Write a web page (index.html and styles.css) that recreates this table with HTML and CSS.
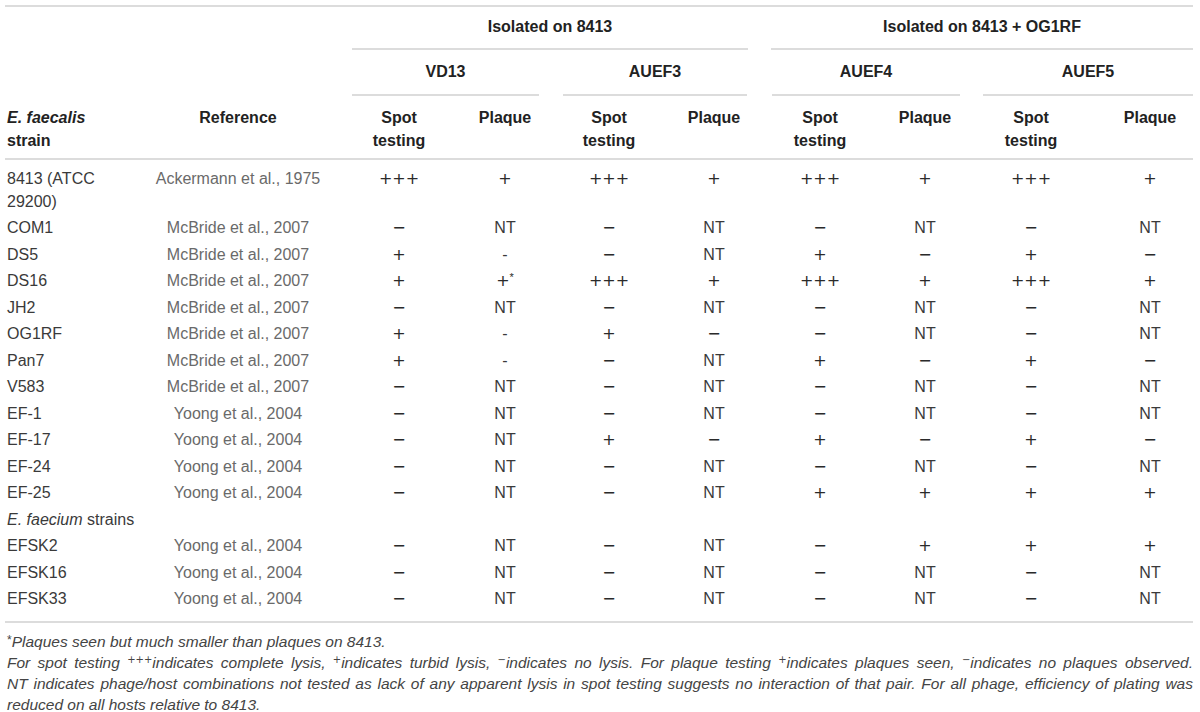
FILE: index.html
```html
<!DOCTYPE html>
<html>
<head>
<meta charset="utf-8">
<link rel="stylesheet" href="styles.css">
</head>
<body>
<div class="page">
<table class="data">
<colgroup>
<col class="c-strain"><col class="c-ref">
<col class="c3"><col class="c4"><col class="c5"><col class="c6">
<col class="c7"><col class="c8"><col class="c9"><col class="c10">
</colgroup>
<thead>
<tr class="h1">
<td colspan="2"></td>
<th colspan="4"><div class="rule g1">Isolated on 8413</div></th>
<th colspan="4"><div class="rule g2">Isolated on 8413 + OG1RF</div></th>
</tr>
<tr class="h2">
<td colspan="2"></td>
<th colspan="2"><div class="rule s-vd13">VD13</div></th>
<th colspan="2"><div class="rule s-auef3">AUEF3</div></th>
<th colspan="2"><div class="rule s-auef4">AUEF4</div></th>
<th colspan="2"><div class="rule s-auef5">AUEF5</div></th>
</tr>
<tr class="h3">
<th class="strain"><i>E. faecalis</i> strain</th>
<th class="ref">Reference</th>
<th>Spot<br>testing</th><th>Plaque</th>
<th>Spot<br>testing</th><th>Plaque</th>
<th>Spot<br>testing</th><th>Plaque</th>
<th>Spot<br>testing</th><th class="last">Plaque</th>
</tr>
</thead>
<tbody>
<tr class="first"><td class="strain">8413 (ATCC 29200)</td><td class="ref">Ackermann et al., 1975</td><td class="sym">+++</td><td class="sym">+</td><td class="sym">+++</td><td class="sym">+</td><td class="sym">+++</td><td class="sym">+</td><td class="sym">+++</td><td class="sym last">+</td></tr>
<tr><td class="strain">COM1</td><td class="ref">McBride et al., 2007</td><td class="sym">−</td><td>NT</td><td class="sym">−</td><td>NT</td><td class="sym">−</td><td>NT</td><td class="sym">−</td><td class="last">NT</td></tr>
<tr><td class="strain">DS5</td><td class="ref">McBride et al., 2007</td><td class="sym">+</td><td>-</td><td class="sym">−</td><td>NT</td><td class="sym">+</td><td class="sym">−</td><td class="sym">+</td><td class="sym last">−</td></tr>
<tr><td class="strain">DS16</td><td class="ref">McBride et al., 2007</td><td class="sym">+</td><td class="sym">+<sup class="ast">*</sup></td><td class="sym">+++</td><td class="sym">+</td><td class="sym">+++</td><td class="sym">+</td><td class="sym">+++</td><td class="sym last">+</td></tr>
<tr><td class="strain">JH2</td><td class="ref">McBride et al., 2007</td><td class="sym">−</td><td>NT</td><td class="sym">−</td><td>NT</td><td class="sym">−</td><td>NT</td><td class="sym">−</td><td class="last">NT</td></tr>
<tr><td class="strain">OG1RF</td><td class="ref">McBride et al., 2007</td><td class="sym">+</td><td>-</td><td class="sym">+</td><td class="sym">−</td><td class="sym">−</td><td>NT</td><td class="sym">−</td><td class="last">NT</td></tr>
<tr><td class="strain">Pan7</td><td class="ref">McBride et al., 2007</td><td class="sym">+</td><td>-</td><td class="sym">−</td><td>NT</td><td class="sym">+</td><td class="sym">−</td><td class="sym">+</td><td class="sym last">−</td></tr>
<tr><td class="strain">V583</td><td class="ref">McBride et al., 2007</td><td class="sym">−</td><td>NT</td><td class="sym">−</td><td>NT</td><td class="sym">−</td><td>NT</td><td class="sym">−</td><td class="last">NT</td></tr>
<tr><td class="strain">EF-1</td><td class="ref">Yoong et al., 2004</td><td class="sym">−</td><td>NT</td><td class="sym">−</td><td>NT</td><td class="sym">−</td><td>NT</td><td class="sym">−</td><td class="last">NT</td></tr>
<tr><td class="strain">EF-17</td><td class="ref">Yoong et al., 2004</td><td class="sym">−</td><td>NT</td><td class="sym">+</td><td class="sym">−</td><td class="sym">+</td><td class="sym">−</td><td class="sym">+</td><td class="sym last">−</td></tr>
<tr><td class="strain">EF-24</td><td class="ref">Yoong et al., 2004</td><td class="sym">−</td><td>NT</td><td class="sym">−</td><td>NT</td><td class="sym">−</td><td>NT</td><td class="sym">−</td><td class="last">NT</td></tr>
<tr><td class="strain">EF-25</td><td class="ref">Yoong et al., 2004</td><td class="sym">−</td><td>NT</td><td class="sym">−</td><td>NT</td><td class="sym">+</td><td class="sym">+</td><td class="sym">+</td><td class="sym last">+</td></tr>
<tr><td class="strain group" colspan="10"><i>E. faecium</i> strains</td></tr>
<tr><td class="strain">EFSK2</td><td class="ref">Yoong et al., 2004</td><td class="sym">−</td><td>NT</td><td class="sym">−</td><td>NT</td><td class="sym">−</td><td class="sym">+</td><td class="sym">+</td><td class="sym last">+</td></tr>
<tr><td class="strain">EFSK16</td><td class="ref">Yoong et al., 2004</td><td class="sym">−</td><td>NT</td><td class="sym">−</td><td>NT</td><td class="sym">−</td><td>NT</td><td class="sym">−</td><td class="last">NT</td></tr>
<tr class="lastrow"><td class="strain">EFSK33</td><td class="ref">Yoong et al., 2004</td><td class="sym">−</td><td>NT</td><td class="sym">−</td><td>NT</td><td class="sym">−</td><td>NT</td><td class="sym">−</td><td class="last">NT</td></tr>
</tbody>
</table>
<div class="notes">
<p class="line"><span class="star">*</span>Plaques seen but much smaller than plaques on 8413.</p>
<p class="line full">For spot testing <sup>+++</sup>indicates complete lysis, <sup>+</sup>indicates turbid lysis, <sup>−</sup>indicates no lysis. For plaque testing <sup>+</sup>indicates plaques seen, <sup>−</sup>indicates no plaques observed.</p>
<p class="line full">NT indicates phage/host combinations not tested as lack of any apparent lysis in spot testing suggests no interaction of that pair. For all phage, efficiency of plating was</p>
<p class="line">reduced on all hosts relative to 8413.</p>
</div>
</div>
</body>
</html>
```

FILE: styles.css
```css
html, body {
  margin: 0;
  padding: 0;
  background: #ffffff;
}

body {
  font-family: "Liberation Sans", Arial, sans-serif;
  color: #333333;
  font-size: 16px;
}

.page {
  padding: 5px 7px 0 5px;
}

table.data {
  width: 1188px;
  border-collapse: separate;
  border-spacing: 0;
  table-layout: fixed;
  border-top: 2px solid #dcdcdc;
}

.c-strain { width: 145px; }
.c-ref { width: 198px; }
.c3 { width: 102px; }
.c4 { width: 110px; }
.c5 { width: 98px; }
.c6 { width: 112px; }
.c7 { width: 100px; }
.c8 { width: 110px; }
.c9 { width: 102px; }
.c10 { width: 111px; }

th, td {
  padding: 0;
  text-align: center;
}

th {
  font-weight: bold;
  color: #222222;
}

.rule {
  border-bottom: 2px solid #dcdcdc;
  line-height: 22px;
  text-align: center;
}

.h1 .rule {
  padding: 9px 0 10px;
}

.h2 .rule {
  padding: 11px 0 11px;
}

.g1 { margin: 0 22px 0 4px; }
.g2 { margin: 0 0 0 1px; }
.s-vd13 { margin: 0 21px 0 4px; }
.s-auef3 { margin: 0 23px 0 3px; }
.s-auef4 { margin: 0 20px 0 2px; }
.s-auef5 { margin: 0 0 0 3px; }

.h3 th {
  vertical-align: top;
  line-height: 23px;
  padding: 10px 0 6px;
  border-bottom: 2px solid #dcdcdc;
}

.h3 th.strain {
  text-align: left;
  padding-left: 2px;
  padding-right: 25px;
}

.h3 th.ref {
  padding-right: 22px;
}

.h3 th.last,
tbody td.last {
  padding-left: 25px;
}

tbody td {
  vertical-align: top;
  line-height: 22.5px;
  padding-top: 2px;
  padding-bottom: 2px;
  color: #3a3a3a;
}

tbody tr.first td {
  padding-top: 8px;
}

tbody tr.lastrow td {
  padding-bottom: 10px;
  border-bottom: 2px solid #dcdcdc;
}

tbody td.strain {
  text-align: left;
  padding-left: 2px;
  padding-right: 25px;
}

tbody td.group {
  padding-right: 0;
}

tbody td.ref {
  color: #6a6a6a;
  padding-right: 22px;
}

tbody td.sym {
  font-family: "DejaVu Sans", sans-serif;
  font-size: 16px;
  color: #2a2a2a;
}

sup.ast {
  font-family: "Liberation Sans", Arial, sans-serif;
  font-size: 11px;
  vertical-align: 5px;
  line-height: 0;
}

.notes {
  margin-top: 8px;
  padding-left: 2px;
  width: 1186px;
  font-style: italic;
  font-size: 15.5px;
  line-height: 21px;
  color: #444444;
}

.notes .line {
  margin: 0;
  white-space: nowrap;
}

.notes .line.full {
  text-align: justify;
  text-align-last: justify;
  white-space: normal;
}

.notes sup {
  font-style: normal;
  font-size: 10px;
  line-height: 0;
  vertical-align: 5px;
  font-family: "DejaVu Sans", sans-serif;
}

.star {
  font-style: normal;
  font-size: 12px;
  vertical-align: 3px;
  line-height: 0;
}
```
